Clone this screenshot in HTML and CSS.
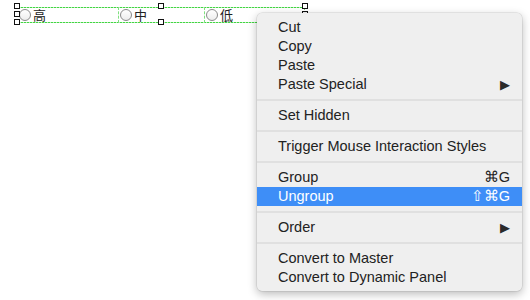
FILE: index.html
```html
<!DOCTYPE html>
<html>
<head>
<meta charset="utf-8">
<link rel="stylesheet" href="styles.css">
</head>
<body>
<div class="canvas">
  <div class="group">
    <div class="cell cell-1"><span class="radio"></span><span class="label">高</span></div>
    <div class="cell cell-2"><span class="radio"></span><span class="label">中</span></div>
    <div class="cell cell-3"><span class="radio"></span><span class="label">低</span></div>
    <span class="handle h-tl"></span>
    <span class="handle h-ml"></span>
    <span class="handle h-bl"></span>
    <span class="handle h-tc"></span>
    <span class="handle h-bc"></span>
    <span class="handle h-tr"></span>
    <span class="handle h-mr"></span>
    <span class="handle h-br"></span>
  </div>

  <div class="menu">
    <div class="item"><span>Cut</span></div>
    <div class="item"><span>Copy</span></div>
    <div class="item"><span>Paste</span></div>
    <div class="item"><span>Paste Special</span><span class="arrow">&#9654;</span></div>
    <div class="sep"></div>
    <div class="item"><span>Set Hidden</span></div>
    <div class="sep"></div>
    <div class="item"><span>Trigger Mouse Interaction Styles</span></div>
    <div class="sep"></div>
    <div class="item"><span>Group</span><span class="key">&#8984;G</span></div>
    <div class="item active"><span>Ungroup</span><span class="key">&#8679;&#8984;G</span></div>
    <div class="sep"></div>
    <div class="item"><span>Order</span><span class="arrow">&#9654;</span></div>
    <div class="sep"></div>
    <div class="item"><span>Convert to Master</span></div>
    <div class="item"><span>Convert to Dynamic Panel</span></div>
  </div>
</div>
</body>
</html>
```

FILE: styles.css
```css
html, body {
  margin: 0;
  padding: 0;
  background: #ffffff;
}

.canvas {
  position: relative;
  width: 530px;
  height: 300px;
  overflow: hidden;
  font-family: "Liberation Sans", Arial, sans-serif;
}

.group {
  position: absolute;
  left: 18px;
  top: 7px;
  width: 287px;
  height: 16px;
  display: flex;
  background-image:
    repeating-linear-gradient(90deg, #44d444 0 2px, #b8f0b8 2px 3px),
    repeating-linear-gradient(90deg, #44d444 0 2px, #b8f0b8 2px 3px);
  background-size: 100% 1px, 100% 1px;
  background-position: 0 0, 0 100%;
  background-repeat: no-repeat;
}

.cell {
  display: flex;
  align-items: center;
  height: 100%;
  box-sizing: border-box;
  border-left: 1px dashed #7fe07f;
}

.cell-1 { width: 100px; border-left: none; }
.cell-2 { width: 86px; }
.cell-3 { width: 101px; border-right: 1px dashed #7fe07f; }

.radio {
  width: 12px;
  height: 12px;
  margin-left: 1px;
  border-radius: 50%;
  border: 1px solid #8a8a8a;
  box-sizing: border-box;
  background: linear-gradient(#ffffff, #ededed);
  flex: none;
}

.label {
  margin-left: 2px;
  font-family: "Noto Sans CJK SC", sans-serif;
  font-size: 13px;
  line-height: 14px;
  color: #222222;
}

.handle {
  position: absolute;
  width: 6px;
  height: 6px;
  background: #ffffff;
  border: 1px solid #111111;
  box-sizing: border-box;
}

.h-tl { left: -4px; top: -4px; }
.h-ml { left: -4px; top: 4px; }
.h-bl { left: -4px; top: 12px; }
.h-tc { left: 140px; top: -4px; }
.h-bc { left: 140px; top: 12px; }
.h-tr { left: 284px; top: -4px; }
.h-mr { left: 284px; top: 4px; }
.h-br { left: 284px; top: 12px; }

.menu {
  position: absolute;
  left: 257px;
  top: 13px;
  width: 265px;
  box-sizing: border-box;
  padding: 5px 0 4px;
  background: #efefef;
  border-radius: 5px;
  box-shadow: 0 0 0 0.5px rgba(0, 0, 0, 0.12), 0 3px 10px rgba(0, 0, 0, 0.28);
  font-size: 14.5px;
  color: #222222;
}

.item {
  height: 19px;
  line-height: 19px;
  padding: 0 12px 0 21px;
  display: flex;
  justify-content: space-between;
  align-items: center;
  white-space: nowrap;
}

.item.active {
  background: #3e8ef7;
  color: #ffffff;
}

.key {
  font-size: 14.5px;
}

.arrow {
  font-size: 13px;
  color: #2a2a2a;
}

.sep {
  height: 2px;
  margin: 5px 0;
  background: #e0e0e0;
}
```
